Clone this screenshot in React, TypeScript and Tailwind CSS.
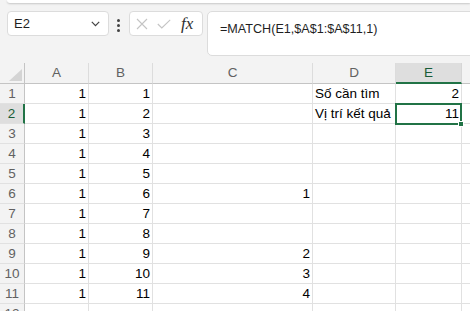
import React from "react";

const cols = ["A", "B", "C", "D", "E"];

type Cell = { v: string; left?: boolean };

const data: Record<number, Partial<Record<string, Cell>>> = {
  1: { D: { v: "Số cần tìm", left: true }, E: { v: "2" } },
  2: { D: { v: "Vị trí kết quả", left: true }, E: { v: "11" } },
  6: { C: { v: "1" } },
  9: { C: { v: "2" } },
  10: { C: { v: "3" } },
  11: { C: { v: "4" } },
};

function FormulaBar() {
  return (
    <div className="h-[63px] bg-[#f3f3f3]">
      {/* ribbon edge */}
      <div className="ml-[7px] h-[3px] rounded-bl-[6px] bg-white shadow-[0_1px_2px_rgba(0,0,0,0.18)]" />

      <div className="mt-[8px] flex items-start">
        {/* Name box */}
        <div className="ml-[7px] flex h-[25px] w-[102px] items-center justify-between rounded-[4px] border border-[#dcdcdc] bg-white pl-[6px] pr-[8px]">
          <span className="text-[13px] text-[#1f1f1f]">E2</span>
          <svg width="9" height="6" viewBox="0 0 9 6" className="text-[#424242]">
            <polyline points="0.8,0.8 4.5,4.6 8.2,0.8" fill="none" stroke="currentColor" strokeWidth="1.2" />
          </svg>
        </div>

        {/* dots */}
        <div className="ml-[8px] mr-[9px] mt-[8px] flex w-[3px] flex-col gap-[2.5px]">
          <span className="h-[2.5px] w-[2.5px] rounded-full bg-[#424242]" />
          <span className="h-[2.5px] w-[2.5px] rounded-full bg-[#424242]" />
          <span className="h-[2.5px] w-[2.5px] rounded-full bg-[#424242]" />
        </div>

        {/* cancel / enter / fx */}
        <div className="flex h-[25px] w-[74px] items-center rounded-[4px] border border-[#dcdcdc] bg-white pl-[6px]">
          <svg width="12" height="12" viewBox="0 0 12 12" className="text-[#c4c4c4]">
            <path d="M1 1 L11 11 M11 1 L1 11" stroke="currentColor" strokeWidth="1.1" fill="none" />
          </svg>
          <svg width="14" height="10" viewBox="0 0 14 10" className="ml-[9px] text-[#c4c4c4]">
            <polyline points="0.8,5 4.8,9 13.2,0.8" stroke="currentColor" strokeWidth="1.1" fill="none" />
          </svg>
          <span className="ml-[10px] text-[17px] italic leading-none text-[#2f2f2f]" style={{ fontFamily: '"Liberation Serif", "DejaVu Serif", serif' }}>
            fx
          </span>
        </div>

        {/* formula */}
        <div className="-mr-[8px] ml-[4px] h-[45px] flex-1 rounded-[5px] border border-[#dcdcdc] bg-white pl-[12px] pt-[4px]">
          <span className="text-[12.6px] text-[#1f1f1f]">=MATCH(E1,$A$1:$A$11,1)</span>
        </div>
      </div>
    </div>
  );
}

function HeaderRow() {
  return (
    <>
      <div className="relative h-[21px] border-b border-r border-[#c4c4c4] bg-[#f3f3f3]">
        <svg width="13" height="12" viewBox="0 0 13 12" className="absolute bottom-[2px] right-[2px]">
          <polygon points="13,0 13,12 0,12" fill="#d4d4d4" />
        </svg>
      </div>
      {cols.map((c) => (
        <div
          key={c}
          className={
            c === "E"
              ? "flex h-[21px] items-center justify-center border-b-2 border-r border-b-[#217346] border-r-[#d6d6d6] bg-[#dedede] pt-[1px] text-[13.5px] text-[#185c37]"
              : "flex h-[21px] items-center justify-center border-b border-r border-b-[#c4c4c4] border-r-[#dcdcdc] bg-[#f3f3f3] text-[13.5px] text-[#616161]"
          }
        >
          {c}
        </div>
      ))}
      <div className="h-[21px] border-b border-[#c4c4c4] bg-[#f3f3f3]" />
    </>
  );
}

function Row({ n }: { n: number }) {
  const row = data[n] || {};
  const values: Record<string, Cell | undefined> = {
    A: { v: "1" },
    B: { v: String(n) },
    ...row,
  };
  if (n > 11) {
    values.A = undefined;
    values.B = undefined;
  }
  const selected = n === 2;
  return (
    <>
      <div
        className={
          selected
            ? "flex h-[20px] items-center justify-center border-b border-r-2 border-b-[#e1e1e1] border-r-[#217346] bg-[#dedede] text-[13.5px] leading-[19px] text-[#185c37]"
            : "flex h-[20px] items-center justify-center border-b border-r border-b-[#e1e1e1] border-r-[#c4c4c4] bg-[#f3f3f3] text-[13.5px] leading-[19px] text-[#616161]"
        }
      >
        {n}
      </div>
      {cols.map((c) => {
        const cell = values[c];
        const isSel = selected && c === "E";
        return (
          <div
            key={c}
            className={`relative flex h-[20px] border-b border-r border-[#e1e1e1] bg-white text-[13.5px] leading-[19px] text-black ${
              cell?.left ? "justify-start pl-[2px]" : "justify-end pr-[2px]"
            }`}
          >
            <span className="whitespace-nowrap">{cell?.v}</span>
            {isSel && (
              <div className="absolute -left-[1px] -top-[1px] z-10 h-[22px] w-[67px] border-2 border-[#217346]">
                <div className="absolute -bottom-[4px] -right-[4px] h-[6px] w-[6px] border border-white bg-[#217346]" />
              </div>
            )}
          </div>
        );
      })}
      <div className="h-[20px] border-b border-[#e1e1e1] bg-white" />
    </>
  );
}

export default function App() {
  return (
    <div
      className="h-[311px] w-[470px] overflow-hidden bg-[#f3f3f3]"
      style={{ fontFamily: '"Liberation Sans", Arial, sans-serif' }}
    >
      <FormulaBar />
      <div className="grid grid-cols-[25px_64px_64px_160px_83px_66px_1fr]">
        <HeaderRow />
        {Array.from({ length: 12 }, (_, i) => (
          <Row key={i} n={i + 1} />
        ))}
      </div>
    </div>
  );
}
